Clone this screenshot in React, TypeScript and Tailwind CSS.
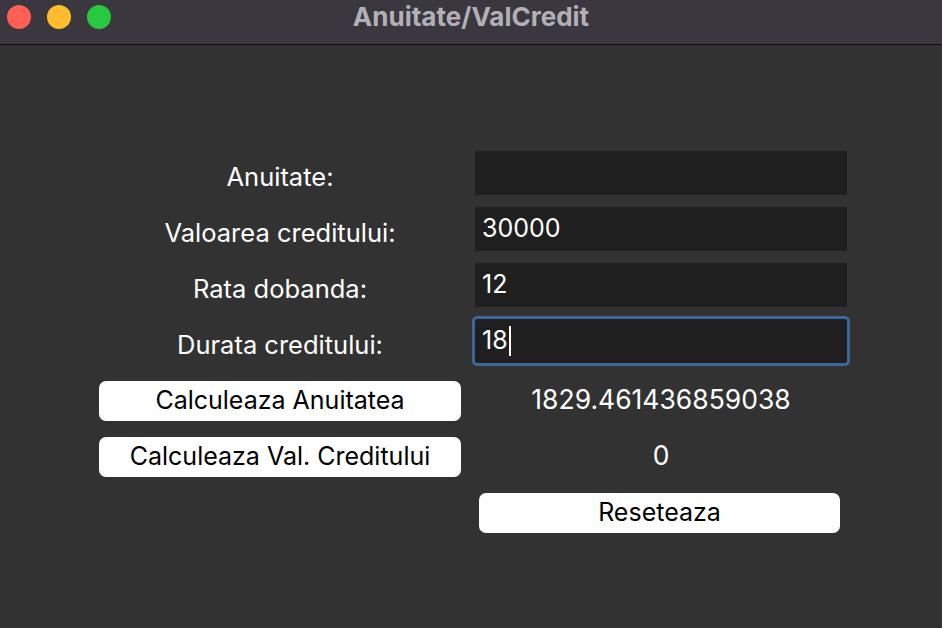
import React from 'react';

const labels = ['Anuitate:', 'Valoarea creditului:', 'Rata dobanda:', 'Durata creditului:'];
const values = ['', '30000', '12', '18'];

const App = () => {
  return (
    <div className="w-[942px] h-[628px] bg-[#323232] overflow-hidden" style={{ fontFamily: 'Inter, "Noto Sans", sans-serif' }}>
      {/* Title bar */}
      <div className="relative h-[45px] bg-[#3a383e] border-b border-[#111111] flex items-center justify-center">
        <div className="absolute left-[7px] top-[5px] flex gap-[16px]">
          <div className="w-[24px] h-[24px] rounded-full bg-[#fe5f57]" />
          <div className="w-[24px] h-[24px] rounded-full bg-[#febc2e]" />
          <div className="w-[24px] h-[24px] rounded-full bg-[#28c840]" />
        </div>
        <div className="text-[26px] font-bold text-[#b2b0b6] -mt-[12px]">Anuitate/ValCredit</div>
      </div>

      <div className="pl-[99px] pt-[106px] flex flex-col">
        {labels.map((label, i) => (
          <div key={i} className="flex gap-[14px] h-[44px] mb-[12px]">
            <div className="w-[362px] flex items-center justify-center pt-[8px] text-[25.5px] text-white">{label}</div>
            <div
              className={
                'w-[372px] bg-[#1f1f1f] flex items-center pl-[7px] text-[25px] text-white ' +
                (i === 3 ? 'outline-[3px] outline-solid outline-[#3b679d] rounded-[2px]' : '')
              }
            >
              {values[i]}
              {i === 3 && <span className="w-[2px] h-[30px] bg-white ml-[1px]" />}
            </div>
          </div>
        ))}

        <div className="flex gap-[14px] h-[40px] mt-[6px] mb-[16px]">
          <button className="w-[362px] bg-white rounded-[7px] text-[25px] text-black">Calculeaza Anuitatea</button>
          <div className="w-[372px] flex items-center justify-center text-[26.5px] text-white pb-[2px]">1829.461436859038</div>
        </div>
        <div className="flex gap-[14px] h-[40px] mb-[16px]">
          <button className="w-[362px] bg-white rounded-[7px] text-[25px] text-black">Calculeaza Val. Creditului</button>
          <div className="w-[372px] flex items-center justify-center text-[26.5px] text-white pb-[2px]">0</div>
        </div>
        <div className="flex gap-[14px] h-[40px]">
          <div className="w-[362px]" />
          <button className="w-[361px] ml-[4px] bg-white rounded-[7px] text-[25px] text-black">Reseteaza</button>
        </div>
      </div>
    </div>
  );
};

export default App;
